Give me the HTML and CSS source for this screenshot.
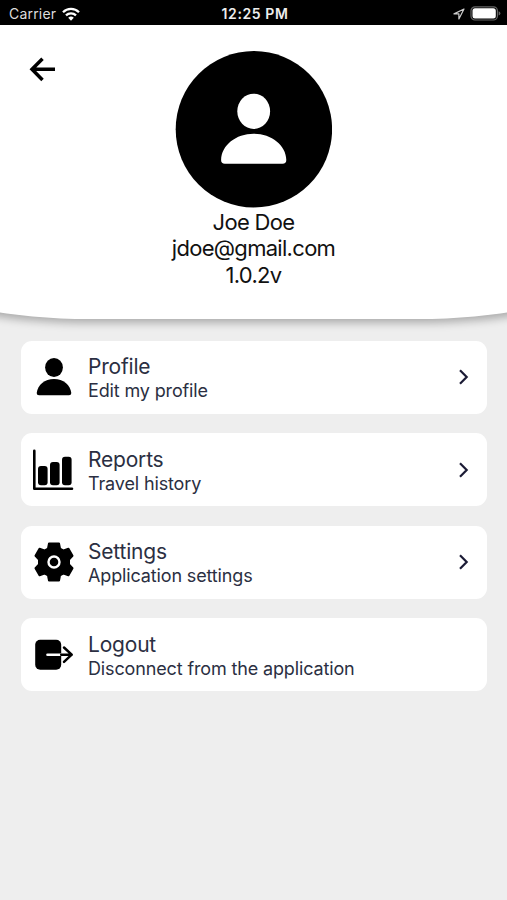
FILE: index.html
```
<!DOCTYPE html>
<html lang="en">
<head>
  <meta charset="UTF-8" />
  <meta name="viewport" content="width=device-width, initial-scale=1.0"/>
  <title>Profile</title>
  <link rel="stylesheet" href="styles.css">
</head>
<body>
  <div class="status-bar">
    <div class="carrier">
      <span>Carrier</span>
      <svg width="18" height="14" viewBox="0 0 18 14" fill="none" stroke="#fff" stroke-width="2.3">
        <path d="M1 5.2a11.4 11.4 0 0 1 16 0"/>
        <path d="M4 8.4a7.1 7.1 0 0 1 10 0"/>
        <path d="M9 13.7l-2.8-2.9a4 4 0 0 1 5.6 0z" fill="#fff" stroke="none"/>
      </svg>
    </div>
    <div class="time">12:25 PM</div>
    <div class="indicators">
      <svg width="12" height="12" viewBox="0 0 12 12" fill="none" stroke="#ccc" stroke-width="1.2" stroke-linejoin="round">
        <path d="M11 1L1 5.9h4.9V11z"/>
      </svg>
      <svg width="31" height="15" viewBox="0 0 31 15">
        <rect x="1" y=".8" width="26.4" height="13.2" rx="4" fill="none" stroke="#666" stroke-width="1.2"/>
        <rect x="2.5" y="2.3" width="23.3" height="10.2" rx="2.5" fill="#fff"/>
        <path d="M28.6 5.2q1.8.6 1.8 2.2t-1.8 2.2z" fill="#666"/>
      </svg>
    </div>
  </div>

  <header class="header">
    <a class="back" href="#" aria-label="Back">
      <svg width="28" height="26" viewBox="0 0 28 26" fill="none" stroke="#000" stroke-width="3.5">
        <path d="M27 13.3H4M14.5 2.7L4 13.3l10.500 10.600"/>
      </svg>
    </a>
    <svg class="avatar" width="157" height="157" viewBox="0 0 157 157">
      <circle cx="78.900" cy="78.200" r="78.200"/>
      <ellipse cx="78.700" cy="60.300" rx="16.400" ry="17.600" fill="#fff"/>
      <path d="M49.900 112.700q-3.800 0-3.800-3.800C46.400 94.200 60.900 82.700 78.700 82.700S111 94.200 111.300 108.900q0 3.800-3.800 3.800z" fill="#fff"/>
    </svg>
    <div class="user-info">
      <div class="name">Joe Doe</div>
      <div class="email">jdoe@gmail.com</div>
      <div class="version">1.0.2v</div>
    </div>
  </header>

  <main class="menu">
    <a class="item" href="#">
      <svg class="icon" width="42" height="42" viewBox="0 0 42 42">
        <ellipse cx="21" cy="11.500" rx="8.900" ry="9.500"/>
        <path d="M6 39.300q-2.300 0-2.300-2.300C4.500 29 11.800 22.900 21 22.900S37.500 29 38.300 37q0 2.300-2.300 2.300z"/>
      </svg>
      <div class="text">
        <div class="title">Profile</div>
        <div class="subtitle">Edit my profile</div>
      </div>
      <svg class="chevron" width="12" height="18" viewBox="0 0 12 18"><path d="M2 2.200L8.700 9 2 15.800"/></svg>
    </a>

    <a class="item" href="#">
      <svg class="icon" width="42" height="42" viewBox="0 0 42 42">
        <path d="M1.300 1.700v38H39" fill="none" stroke="#000" stroke-width="2.600" stroke-linecap="round" stroke-linejoin="round"/>
        <rect x="5" y="17" width="9.600" height="19.300" rx="3"/>
        <rect x="17" y="13" width="9.600" height="23.300" rx="3"/>
        <rect x="29" y="7.800" width="9.600" height="28.500" rx="3"/>
      </svg>
      <div class="text">
        <div class="title">Reports</div>
        <div class="subtitle">Travel history</div>
      </div>
      <svg class="chevron" width="12" height="18" viewBox="0 0 12 18"><path d="M2 2.200L8.700 9 2 15.800"/></svg>
    </a>

    <a class="item" href="#">
      <svg class="icon" width="42" height="42" viewBox="0 0 42 42">
        <path d="M16 2.500h10l1 5 3.500 2 5-1.700 4 7-3.500 3.900v4.600l3.500 3.900-4 7-5-1.700-3.500 2-1 5H16l-1-5-3.500-2-5 1.700-4-7L6 23.300v-4.600l-3.500-3.900 4-7 5 1.700 3.500-2z" stroke="#000" stroke-width="2" stroke-linejoin="round"/>
        <circle cx="21" cy="21" r="5.500" fill="none" stroke="#fff" stroke-width="2.400"/>
      </svg>
      <div class="text">
        <div class="title">Settings</div>
        <div class="subtitle">Application settings</div>
      </div>
      <svg class="chevron" width="12" height="18" viewBox="0 0 12 18"><path d="M2 2.200L8.700 9 2 15.800"/></svg>
    </a>

    <a class="item" href="#">
      <svg class="icon" width="42" height="42" viewBox="0 0 42 42">
        <rect x="2.200" y="5.700" width="26" height="30" rx="5"/>
        <path d="M14.500 20.700h13.700" stroke="#fff" stroke-width="2.600" stroke-linecap="round"/>
        <path d="M28.200 20.700h10.500M31 13.500l7.700 7.200-7.700 7.200" fill="none" stroke="#000" stroke-width="2.500" stroke-linecap="round" stroke-linejoin="round"/>
      </svg>
      <div class="text">
        <div class="title">Logout</div>
        <div class="subtitle">Disconnect from the application</div>
      </div>
    </a>
  </main>
</body>
</html>
```
FILE: styles.css
```
body {
  margin: 0;
  height: 100vh;
  overflow: hidden;
  background: #eee;
  font-family: Inter, "Liberation Sans", sans-serif;
  color: #111;
}

svg {
  display: block;
}

.status-bar {
  position: relative;
  z-index: 1;
  display: grid;
  grid-template-columns: 1fr auto 1fr;
  align-items: center;
  box-sizing: border-box;
  height: 25px;
  padding: 2px 6px 0 9px;
  background: #000;
  color: #fff;
  font-size: 14px;
  line-height: 22px;
}

.carrier {
  display: flex;
  align-items: center;
  gap: 6px;
  color: #ddd;
  letter-spacing: 0.2px;
}

.time {
  font-weight: 600;
  color: #eee;
  letter-spacing: 0.6px;
}

.indicators {
  display: flex;
  justify-content: flex-end;
  align-items: center;
  gap: 5px;
}

.header {
  position: relative;
  display: flex;
  flex-direction: column;
  align-items: center;
  box-sizing: border-box;
  height: 293.5px;
  padding-top: 26px;
  overflow-x: clip;
}

/* wider than the screen so only the end of the curve shows */
.header::before {
  content: "";
  position: absolute;
  z-index: -1;
  top: 0;
  bottom: 0;
  left: -60px;
  right: -60px;
  background: #fff;
  border-radius: 0 0 150px 150px / 0 0 32px 32px;
  box-shadow: 0 8px 9px -4px rgba(0, 0, 0, 0.28);
}

.back {
  position: absolute;
  top: 31px;
  left: 28px;
}

.user-info {
  padding-top: 1px;
  text-align: center;
  font-size: 22px;
  line-height: 26.4px;
  letter-spacing: -0.7px;
}

.menu {
  display: flex;
  flex-direction: column;
  gap: 19.5px;
  padding: 22px 20px 0 20.5px;
}

.item {
  display: flex;
  align-items: center;
  box-sizing: border-box;
  height: 73px;
  padding: 0 17.5px 0 12.5px;
  border-radius: 11px;
  background: #fff;
  color: #2b2f42;
  text-decoration: none;
}

.text {
  flex: 1;
  margin-left: 13px;
  padding-top: 2px;
}

.title {
  font-size: 21px;
  line-height: 25px;
  letter-spacing: -0.2px;
}

.subtitle {
  font-size: 18px;
  line-height: 23px;
  letter-spacing: -0.14px;
}

.chevron {
  fill: none;
  stroke: #1b1b35;
  stroke-width: 2.2;
}
```
